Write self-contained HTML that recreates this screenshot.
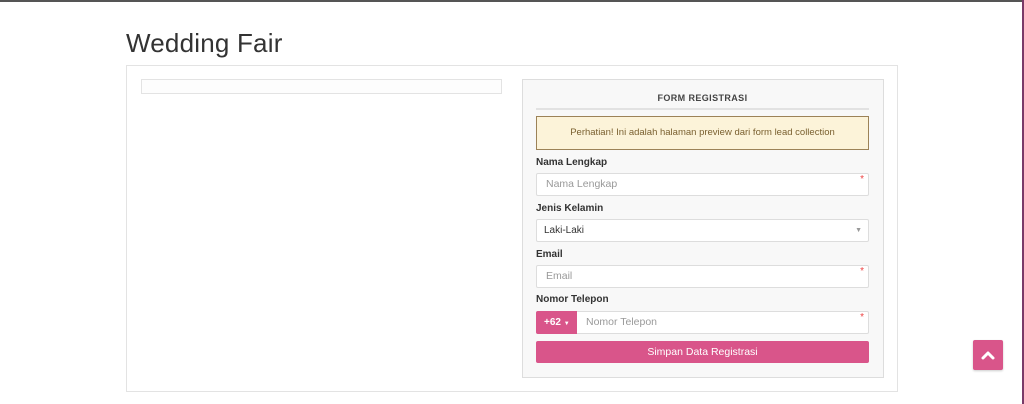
<!DOCTYPE html>
<html><head><style>
*{box-sizing:border-box;margin:0;padding:0}
body{width:1024px;height:404px;background:#fff;font-family:"Liberation Sans",sans-serif;position:relative;overflow:hidden}
.abs{position:absolute}
.tb{left:0;top:0;width:1024px;height:2px;background:#555}
h1{position:absolute;left:126px;top:28px;font-size:26px;font-weight:normal;color:#333;letter-spacing:0.2px}
.box{left:126px;top:65px;width:772px;height:327px;border:1px solid #e3e3e3}
.ph{left:141px;top:79px;width:361px;height:15px;border:1px solid #e3e3e3;background:#fdfdfd}
.panel{left:522px;top:79px;width:362px;height:299px;border:1px solid #ddd;background:#f8f8f8}
.hd{left:536px;top:93px;width:333px;text-align:center;font-size:9px;font-weight:bold;color:#444;letter-spacing:.4px}
.line{left:536px;top:108px;width:333px;height:2px;background:#e2e2e2}
.alert{left:536px;top:116px;width:333px;height:34px;background:#fcf3d9;border:1px solid #9c8257;font-size:9.5px;color:#7a6030;text-align:center;line-height:32px}
.lbl{left:536px;font-size:10px;font-weight:bold;color:#333}
.inp{left:536px;width:333px;height:23px;background:#fff;border:1px solid #ddd;border-radius:2px;font-size:10.5px;color:#999;line-height:21px;padding-left:9px}
.inp .st{position:absolute;right:4px;top:-5px;color:#e44;font-size:10px}
.pre{left:536px;top:311px;width:41px;height:23px;background:#d9558a;color:#fff;font-size:10px;font-weight:bold;line-height:23px;padding-left:8px;border-radius:2px 0 0 2px}
.btn{left:536px;top:341px;width:333px;height:22px;background:#d9558a;color:#fff;font-size:10.5px;text-align:center;line-height:22px;border-radius:2px}
.top{left:973px;top:340px;width:30px;height:30px;background:#d9558a;border-radius:2px;box-shadow:0 1px 2px rgba(0,0,0,.2)}
.edge{left:1022px;top:0;width:2px;height:404px;background:#7a3a68}
</style></head><body>
<div class="abs tb"></div>
<h1>Wedding Fair</h1>
<div class="abs box"></div>
<div class="abs ph"></div>
<div class="abs panel"></div>
<div class="abs hd">FORM REGISTRASI</div>
<div class="abs line"></div>
<div class="abs alert">Perhatian! Ini adalah halaman preview dari form lead collection</div>
<div class="abs lbl" style="top:157px">Nama Lengkap</div>
<div class="abs inp" style="top:173px">Nama Lengkap<span class="st">*</span></div>
<div class="abs lbl" style="top:203px">Jenis Kelamin</div>
<div class="abs inp" style="top:219px;color:#333;font-size:10px;padding-left:7px">Laki-Laki<span style="position:absolute;right:6px;top:0;color:#999;font-size:7px">▼</span></div>
<div class="abs lbl" style="top:249px">Email</div>
<div class="abs inp" style="top:265px">Email<span class="st">*</span></div>
<div class="abs lbl" style="top:294px">Nomor Telepon</div>
<div class="abs inp" style="top:311px;padding-left:49px">Nomor Telepon<span class="st">*</span></div>
<div class="abs pre">+62 <span style="font-size:6px;font-weight:normal">▼</span></div>
<div class="abs btn">Simpan Data Registrasi</div>
<div class="abs top"><svg width="30" height="30" viewBox="0 0 30 30"><path d="M10 18 L15 13 L20 18" stroke="#fff" stroke-width="3" fill="none" stroke-linecap="round" stroke-linejoin="round"/></svg></div>
<div class="abs edge"></div>
</body></html>
